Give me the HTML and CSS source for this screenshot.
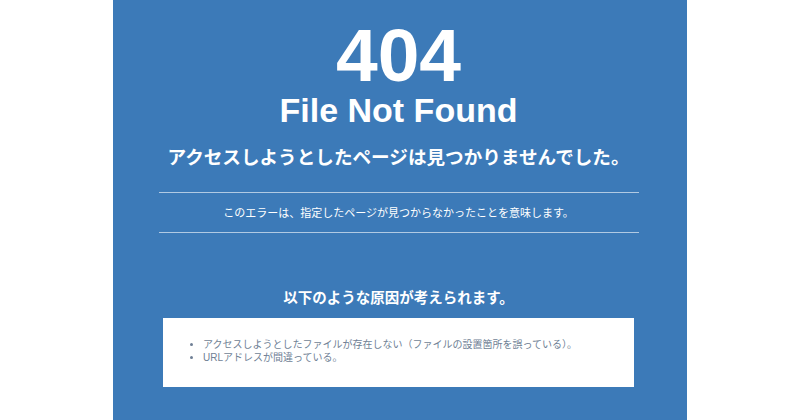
FILE: index.html
```html
<!DOCTYPE html>
<html lang="ja">
<head>
    <meta charset="UTF-8">
    <meta name="viewport" content="width=device-width, initial-scale=1.0">
    <title>404 File Not Found</title>
    <link rel="stylesheet" href="styles.css">
</head>
<body>
    <div class="wrapper">
        <h1 class="code">404</h1>
        <h2 class="title">File Not Found</h2>
        <p class="lead">アクセスしようとしたページは見つかりませんでした。</p>
        <div class="notice">
            <p>このエラーは、指定したページが見つからなかったことを意味します。</p>
        </div>
        <h3 class="cause-title">以下のような原因が考えられます。</h3>
        <div class="cause-box">
            <ul>
                <li>アクセスしようとしたファイルが存在しない（ファイルの設置箇所を誤っている）。</li>
                <li>URLアドレスが間違っている。</li>
            </ul>
        </div>
    </div>
</body>
</html>
```

FILE: styles.css
```css
body {
    margin: 0;
    background: #ffffff;
    font-family: 'Liberation Sans', 'Noto Sans CJK JP', sans-serif;
}

.wrapper {
    width: 574px;
    min-height: 420px;
    margin: 0 auto;
    background: #3c7ab8;
    color: #ffffff;
    text-align: center;
    padding: 20px 3px 0 0;
    box-sizing: border-box;
}

.code {
    margin: 0;
    font-size: 75px;
    line-height: 70px;
    font-weight: bold;
}

.title {
    margin: 0;
    font-size: 34px;
    line-height: 40px;
    font-weight: bold;
}

.lead {
    margin: 15px 0 0;
    font-size: 18.6px;
    line-height: 26px;
    font-weight: bold;
}

.notice {
    width: 480px;
    margin: 21px auto 0;
    border-top: 1px solid rgba(255, 255, 255, 0.6);
    border-bottom: 1px solid rgba(255, 255, 255, 0.6);
}

.notice p {
    margin: 0;
    padding: 12px 0 11px;
    font-size: 11px;
    line-height: 16px;
}

.cause-title {
    margin: 55px 0 0;
    font-size: 14.5px;
    line-height: 20px;
    font-weight: bold;
}

.cause-box {
    width: 471px;
    margin: 10px auto 0;
    background: #ffffff;
    padding: 20px 0 23px;
    text-align: left;
}

.cause-box ul {
    margin: 0;
    padding-left: 40px;
    color: #6f7f95;
    font-size: 10px;
    line-height: 13px;
}
```
